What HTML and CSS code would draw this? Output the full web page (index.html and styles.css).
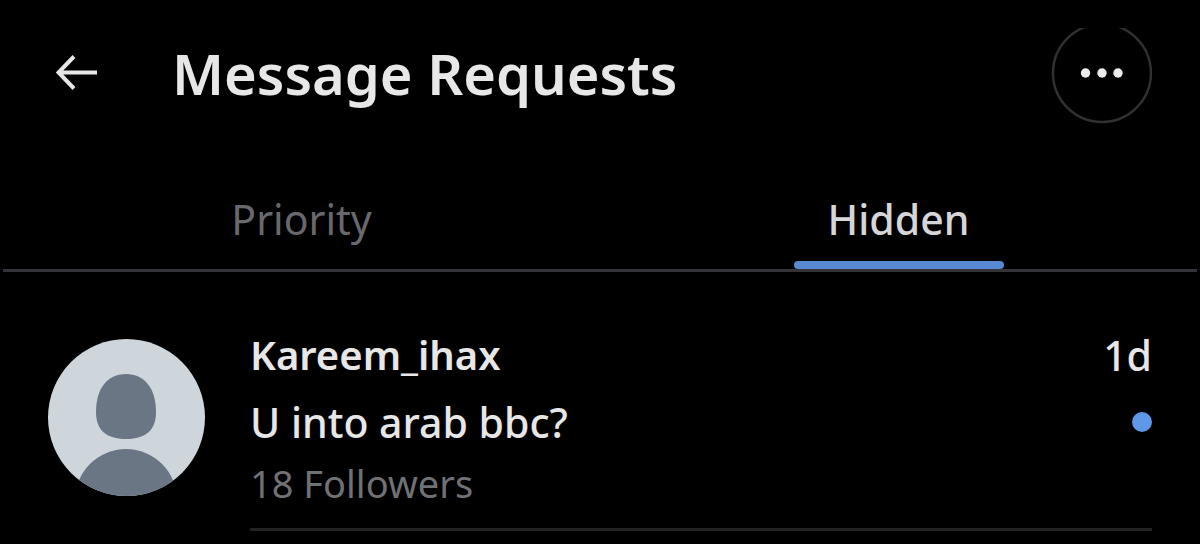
FILE: index.html
```html
<!DOCTYPE html>
<html lang="en">
<head>
<meta charset="utf-8">
<meta name="viewport" content="width=device-width, initial-scale=1">
<title>Message Requests</title>
<link rel="stylesheet" href="styles.css">
</head>
<body>
<header class="topbar">
  <button class="back" aria-label="Back">
    <svg width="42" height="36" viewBox="0 0 42 36" fill="none" stroke="currentColor" stroke-width="4"><path d="M18 1.500 2.500 17.500 18 33.500M2.500 17.500H41"/></svg>
  </button>
  <h1 class="title">Message Requests</h1>
  <button class="more" aria-label="More options">
    <svg width="102" height="96" viewBox="0 0 102 96"><circle cx="52" cy="45" r="49" fill="none" stroke="#303033" stroke-width="2.500"/><g fill="#ededee"><circle cx="35.500" cy="45" r="4.700"/><circle cx="52" cy="45" r="4.700"/><circle cx="68" cy="45" r="4.700"/></g></svg>
  </button>
</header>
<nav class="tabs">
  <button class="tab">Priority</button>
  <button class="tab active">Hidden</button>
</nav>
<main class="list">
  <article class="request">
    <svg class="avatar" width="157" height="157" viewBox="0 0 157 157" role="img" aria-label="Profile picture">
      <defs><clipPath id="round"><circle cx="78.500" cy="78.500" r="78.500"/></clipPath></defs>
      <g clip-path="url(#round)"><rect width="157" height="157" fill="#ced6dc"/><g fill="#6a7684"><path d="M78 35C97 35 108 50 108 73C108 91 98 100 78 100C58 100 48 91 48 73C48 50 59 35 78 35Z"/><circle cx="78" cy="161" r="51"/></g></g>
    </svg>
    <div class="body">
      <div class="row"><h2 class="name">Kareem_ihax</h2><time class="time">1d</time></div>
      <div class="row"><p class="message">U into arab bbc?</p><span class="unread" role="img" aria-label="Unread"></span></div>
      <p class="followers">18 Followers</p>
    </div>
  </article>
</main>
</body>
</html>
```
FILE: styles.css
```css
* { box-sizing: border-box; }
body { margin: 0; background: #000; color: #e7e7e8; font-family: "Noto Sans", sans-serif; }
h1, h2, p { margin: 0; }
button { padding: 0; border: 0; background: none; color: inherit; font: inherit; }
svg { display: block; }
.topbar { display: flex; align-items: flex-start; padding: 28px 48px 48px 56px; }
.back { margin-top: 27px; }
.title { flex: 1; margin: 12px 0 0 74px; font-size: 56px; line-height: 66px; font-weight: 600; white-space: nowrap; }
.tabs { display: grid; grid-template-columns: 1fr 1fr; margin: 0 3px; border-bottom: 3px solid #343438; }
.tab { position: relative; padding-bottom: 3px; color: #68696d; font-size: 41px; line-height: 94px; }
.active { color: #d6d6d8; font-weight: 500; }
.active::after { content: ""; position: absolute; bottom: 0; left: 50%; width: 210px; height: 8px; margin-left: -105px; border-radius: 4px; background: #5689d2; }
.request { display: flex; gap: 45px; padding: 49px 48px 0; }
.avatar { flex: none; margin-top: 18px; }
.body { flex: 1; border-bottom: 3px solid #232326; padding-bottom: 17px; }
.row { display: flex; justify-content: space-between; align-items: center; height: 67px; }
.name { font-size: 40px; font-weight: 600; }
.time, .message { font-size: 41px; font-weight: 500; }
.unread { width: 20px; height: 20px; border-radius: 50%; background: #5e98e6; }
.followers { color: #707175; line-height: 56px; font-size: 38px; }
```
